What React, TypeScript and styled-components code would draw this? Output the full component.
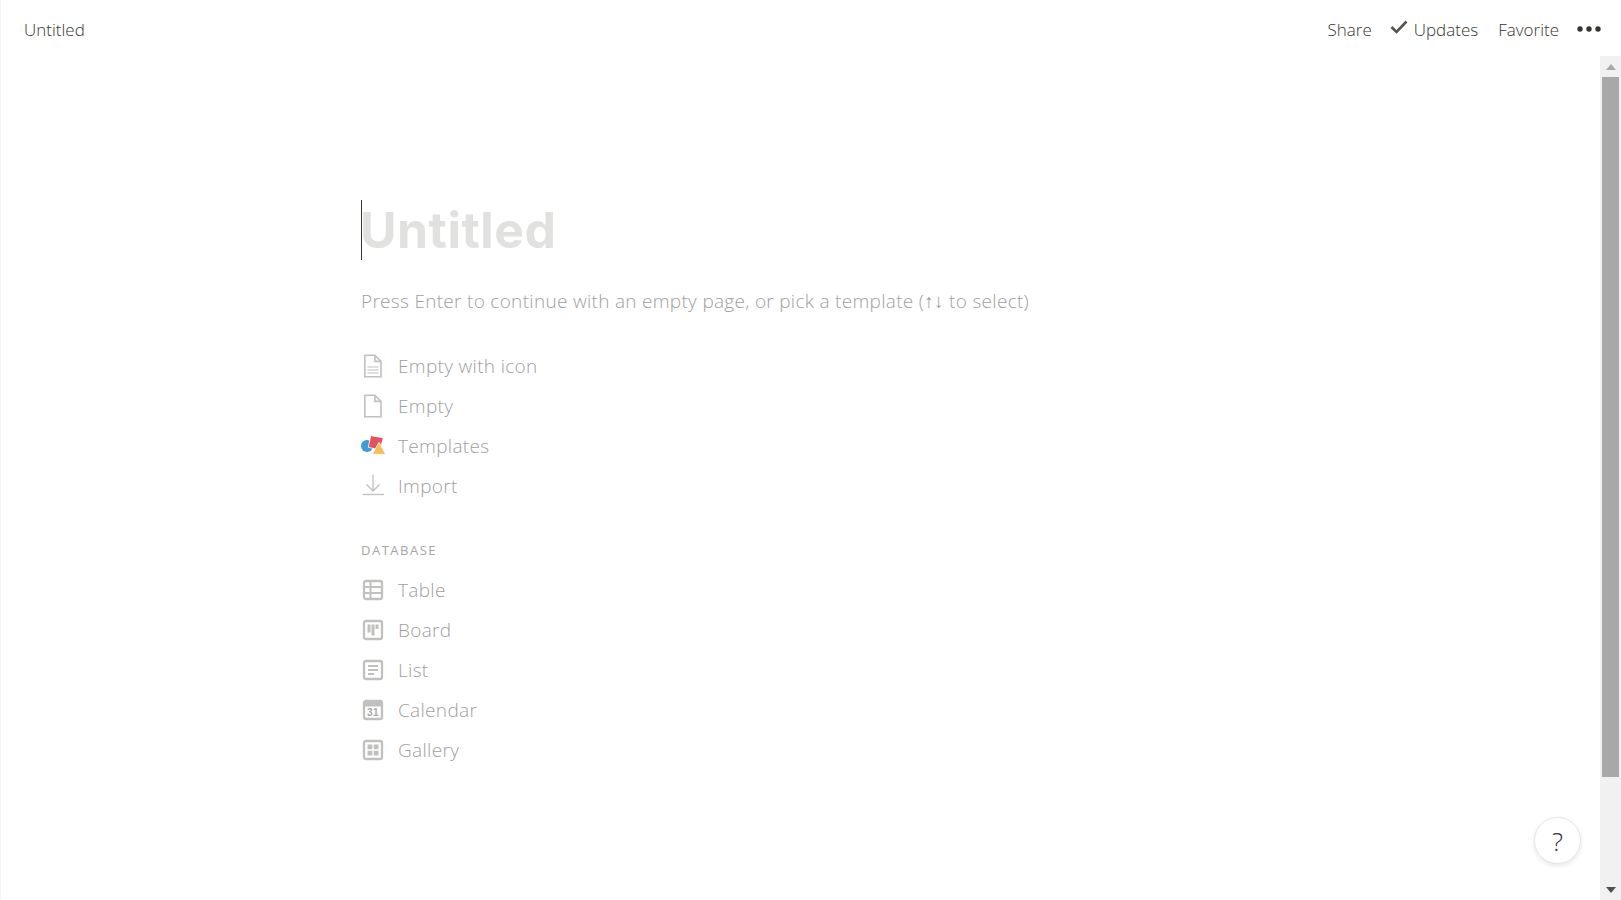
import styled, { createGlobalStyle } from 'styled-components';
import { ReactNode } from 'react';

const GlobalStyle = createGlobalStyle`
    html, body {
        margin: 0;
        padding: 0;
        height: 100%;
        overflow: hidden;
        background: #fff;
    }
    #root {
        height: 100%;
    }
`;

const ICON = '#c0c0be';

const Page = styled.div`
    position: relative;
    display: flex;
    flex-direction: column;
    width: 1621px;
    height: 900px;
    box-sizing: border-box;
    border-left: 1px solid #f3f3f1;
    font-family: 'Open Sans', 'Noto Sans', sans-serif;
    color: #37352f;
    overflow: hidden;
`;

const SidebarHandle = styled.div`
    position: absolute;
    left: -1px;
    top: 185px;
    width: 1px;
    height: 34px;
    background: #e4e4e2;
`;

const TopBar = styled.header`
    display: flex;
    align-items: center;
    justify-content: space-between;
    height: 56px;
    box-sizing: border-box;
    flex: none;
    padding: 3px 20px 0 23px;
    font-size: 17px;
    font-weight: 300;
    color: #37352f;
`;

const Actions = styled.nav`
    display: flex;
    align-items: center;
`;

const Action = styled.span<{ $gap?: number }>`
    display: flex;
    align-items: center;
    margin-right: ${(p) => p.$gap ?? 18}px;
`;

const Dots = styled.svg`
    width: 24px;
    height: 6px;
    margin-top: -2px;
`;

const Body = styled.div`
    display: flex;
    flex: 1;
    min-height: 0;
`;

const Content = styled.main`
    flex: 1;
    padding: 144px 0 0 360px;
`;

const TitleRow = styled.div`
    height: 60px;
    display: flex;
    align-items: center;
`;

const Caret = styled.span`
    width: 1px;
    height: 60px;
    background: #37352f;
    flex: none;
`;

const Title = styled.h1`
    margin: 0 0 0 -2px;
    font-family: 'Inter', sans-serif;
    font-weight: 700;
    font-size: 50px;
    letter-spacing: 0.45px;
    line-height: 60px;
    color: #e1e1e0;
`;

const Hint = styled.p`
    margin: 26px 0 0;
    height: 30px;
    font-size: 19px;
    font-weight: 300;
    line-height: 30px;
    letter-spacing: 0.3px;
    color: #a0a09e;
    white-space: nowrap;
`;

const List = styled.ul<{ $top?: number }>`
    list-style: none;
    margin: ${(p) => p.$top ?? 0}px 0 0;
    padding: 0;
`;

const Item = styled.li`
    display: flex;
    align-items: center;
    height: 40px;
    font-size: 19px;
    font-weight: 300;
    letter-spacing: 0.32px;
    color: #a0a09e;
`;

const IconSlot = styled.span`
    display: flex;
    align-items: center;
    justify-content: center;
    width: 24px;
    height: 24px;
    margin-right: 13px;
    flex: none;
`;

const SectionLabel = styled.div`
    margin-top: 29px;
    height: 35px;
    line-height: 30px;
    font-size: 13px;
    letter-spacing: 1.5px;
    color: #a6a6a4;
`;

const Scrollbar = styled.aside`
    display: flex;
    flex-direction: column;
    align-items: center;
    width: 21px;
    flex: none;
    background: #f1f1f1;
`;

const ScrollButton = styled.div`
    display: flex;
    align-items: center;
    justify-content: center;
    width: 100%;
    height: 21px;
    flex: none;
`;

const ScrollThumb = styled.div`
    width: 17px;
    height: 700px;
    flex: none;
    background: #a8a8a8;
`;

const ScrollSpace = styled.div`
    flex: 1;
`;

const HelpButton = styled.div`
    position: absolute;
    right: 40px;
    bottom: 36px;
    display: flex;
    align-items: center;
    justify-content: center;
    width: 47px;
    height: 47px;
    box-sizing: border-box;
    border-radius: 50%;
    background: #fff;
    border: 1px solid #e6e6e5;
    box-shadow: 0 2px 5px rgba(15, 15, 15, 0.1);
    font-size: 26px;
    font-weight: 300;
    color: #37352f;
`;

const Glyph = ({ children, stroke = 1.6 }: { children: ReactNode; stroke?: number }) => (
    <svg width="24" height="24" viewBox="0 0 24 24" fill="none" stroke={ICON} strokeWidth={stroke}>
        {children}
    </svg>
);

const PageTextIcon = () => (
    <Glyph>
        <path d="M3.8 1.2H14l6 6.2v15.4H3.8z" />
        <path d="M14 1.2v6.2h6" />
        <path d="M6.5 13h11M6.5 16h11M6.5 19h11" strokeWidth="1.2" />
    </Glyph>
);

const PageIcon = () => (
    <Glyph>
        <path d="M3.8 1.2H14l6 6.2v15.4H3.8z" />
        <path d="M14 1.2v6.2h6" />
    </Glyph>
);

const TemplatesIcon = () => (
    <svg width="26" height="24" viewBox="0 0 26 24" style={{ flex: 'none' }}>
        <circle cx="7" cy="12" r="6" fill="#3d9bd6" />
        <path d="M10.7 1.7l12.6 2L20 16 8.3 13.3z" fill="#e5525f" stroke="#fff" strokeWidth="0.8" />
        <path d="M19 8.3l6.7 12H12.3z" fill="#f6bd5a" stroke="#fff" strokeWidth="0.8" />
    </svg>
);

const ImportIcon = () => (
    <Glyph stroke={1.3}>
        <path d="M12 .5V17M5.5 10.5l6.5 6.5 6.5-6.5" />
        <path d="M1.5 20.5H23" />
    </Glyph>
);

const FrameIcon = ({ children }: { children: ReactNode }) => (
    <Glyph>
        <rect x="3" y="3" width="18" height="18" rx="2" strokeWidth="2.3" />
        {children}
    </Glyph>
);

const TableIcon = () => (
    <FrameIcon>
        <path d="M3 9h18M3 15h18M9.5 3v18" strokeWidth="2" />
    </FrameIcon>
);

const BoardIcon = () => (
    <FrameIcon>
        <path d="M6.5 6.5h3v8h-3zM10.5 6.5h3v11h-3zM14.5 6.5h3v4.5h-3z" fill={ICON} stroke="none" />
    </FrameIcon>
);

const ListIcon = () => (
    <FrameIcon>
        <path d="M7 8h10M7 12h10M7 16h6" strokeWidth="1.8" />
    </FrameIcon>
);

const CalendarIcon = () => (
    <svg width="24" height="24" viewBox="0 0 24 24">
        <rect x="3" y="3" width="18" height="18" rx="2" fill="none" stroke={ICON} strokeWidth="2.3" />
        <rect x="3" y="3" width="18" height="5.5" fill={ICON} />
        <text x="12" y="18.2" textAnchor="middle" fontSize="10" fontWeight="700" fontFamily="'Liberation Sans', sans-serif" fill="#a9a9a7">
            31
        </text>
    </svg>
);

const GalleryIcon = () => (
    <FrameIcon>
        <path d="M6.5 6.5h4.8v4.8H6.5zM12.7 6.5h4.8v4.8h-4.8zM6.5 12.7h4.8v4.8H6.5zM12.7 12.7h4.8v4.8h-4.8z" fill={ICON} stroke="none" />
    </FrameIcon>
);

const startItems = [
    { label: 'Empty with icon', icon: <PageTextIcon /> },
    { label: 'Empty', icon: <PageIcon /> },
    { label: 'Templates', icon: <TemplatesIcon /> },
    { label: 'Import', icon: <ImportIcon /> },
];

const databaseItems = [
    { label: 'Table', icon: <TableIcon /> },
    { label: 'Board', icon: <BoardIcon /> },
    { label: 'List', icon: <ListIcon /> },
    { label: 'Calendar', icon: <CalendarIcon /> },
    { label: 'Gallery', icon: <GalleryIcon /> },
];

export default function App() {
    return (
        <Page>
            <GlobalStyle />
            <SidebarHandle />
            <TopBar>
                <span>Untitled</span>
                <Actions>
                    <Action>Share</Action>
                    <Action $gap={20}>
                        <svg width="18" height="14" viewBox="0 0 18 14" fill="none" stroke="#55534e" strokeWidth="2.6" style={{ marginRight: 6, marginTop: -5 }}>
                            <path d="M1.5 7l5 5L16.5 1.5" />
                        </svg>
                        Updates
                    </Action>
                    <Action>Favorite</Action>
                    <Dots viewBox="0 0 24 6">
                        <circle cx="3" cy="3" r="2.7" fill="#37352f" />
                        <circle cx="12" cy="3" r="2.7" fill="#37352f" />
                        <circle cx="21" cy="3" r="2.7" fill="#37352f" />
                    </Dots>
                </Actions>
            </TopBar>
            <Body>
                <Content>
                    <TitleRow>
                        <Caret />
                        <Title>Untitled</Title>
                    </TitleRow>
                    <Hint>Press Enter to continue with an empty page, or pick a template (↑↓ to select)</Hint>
                    <List $top={30}>
                        {startItems.map((item) => (
                            <Item key={item.label}>
                                <IconSlot>{item.icon}</IconSlot>
                                {item.label}
                            </Item>
                        ))}
                    </List>
                    <SectionLabel>DATABASE</SectionLabel>
                    <List>
                        {databaseItems.map((item) => (
                            <Item key={item.label}>
                                <IconSlot>{item.icon}</IconSlot>
                                {item.label}
                            </Item>
                        ))}
                    </List>
                </Content>
                <Scrollbar>
                    <ScrollButton>
                        <svg width="10" height="6" viewBox="0 0 10 6">
                            <path d="M5 0l5 6H0z" fill="#a8a8a8" />
                        </svg>
                    </ScrollButton>
                    <ScrollThumb />
                    <ScrollSpace />
                    <ScrollButton>
                        <svg width="10" height="6" viewBox="0 0 10 6">
                            <path d="M0 0h10L5 6z" fill="#505050" />
                        </svg>
                    </ScrollButton>
                </Scrollbar>
            </Body>
            <HelpButton>?</HelpButton>
        </Page>
    );
}
